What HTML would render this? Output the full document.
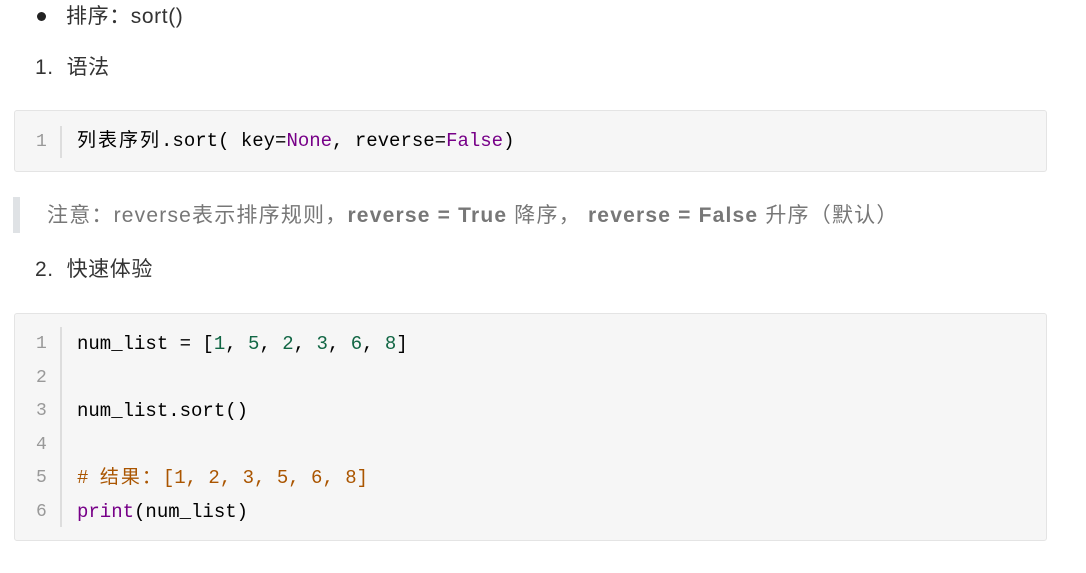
<!DOCTYPE html>
<html><head><meta charset="utf-8"><style>
body{margin:0;width:1086px;height:573px;background:#fff;font-family:"Liberation Sans","Noto Sans CJK SC",sans-serif;color:#333;position:relative;overflow:hidden}
.a{position:absolute;white-space:pre}
.t{font-size:21px;line-height:24px;letter-spacing:0.6px}
.box{position:absolute;left:14px;width:1031px;background:#f6f6f6;border:1px solid #e4e4e4;border-radius:3px}
.bar{position:absolute;left:60px;width:2px;background:#ddd}
.m{font-family:"Liberation Mono","Noto Sans CJK SC",monospace;font-size:19px;line-height:24px;color:#000}
.cj{letter-spacing:2px}
.n{color:#999;font-family:"Liberation Mono",monospace;font-size:18px;line-height:24px}
.k{color:#770088}.g{color:#116644}.c{color:#aa5500}.b{color:#221199}
</style></head><body>
<div class="a" style="left:37px;top:12px;width:9px;height:9px;border-radius:50%;background:#222"></div>
<div class="a t" style="left:66px;top:5px">排序：sort()</div>
<div class="a t" style="left:35px;top:56px">1.  语法</div>
<div class="box" style="top:110px;height:60px"></div>
<div class="bar" style="top:126px;height:32px"></div>
<div class="a n" style="left:36px;top:130px">1</div>
<div class="a m" style="left:77px;top:129px"><span class="cj">列表序列</span>.sort( key=<span class="k">None</span>, reverse=<span class="k">False</span>)</div>
<div class="a" style="left:13px;top:197px;width:7px;height:36px;background:#dfe2e5"></div>
<div class="a t" style="left:47px;top:204px;color:#777;letter-spacing:1.2px">注意：reverse表示排序规则，<b>reverse = True</b> 降序， <b>reverse = False</b> 升序（默认）</div>
<div class="a t" style="left:35px;top:258px">2.  快速体验</div>
<div class="box" style="top:313px;height:226px"></div>
<div class="bar" style="top:327px;height:200px"></div>
<div class="a n" style="left:36px;top:332px">1</div>
<div class="a n" style="left:36px;top:366px">2</div>
<div class="a n" style="left:36px;top:399px">3</div>
<div class="a n" style="left:36px;top:433px">4</div>
<div class="a n" style="left:36px;top:466px">5</div>
<div class="a n" style="left:36px;top:500px">6</div>
<div class="a m" style="left:77px;top:332px">num_list = [<span class="g">1</span>, <span class="g">5</span>, <span class="g">2</span>, <span class="g">3</span>, <span class="g">6</span>, <span class="g">8</span>]</div>
<div class="a m" style="left:77px;top:399px">num_list.sort()</div>
<div class="a m c" style="left:77px;top:466px"># <span class="cj">结果：</span>[1, 2, 3, 5, 6, 8]</div>
<div class="a m" style="left:77px;top:500px"><span class="k">print</span>(num_list)</div>
</body></html>
